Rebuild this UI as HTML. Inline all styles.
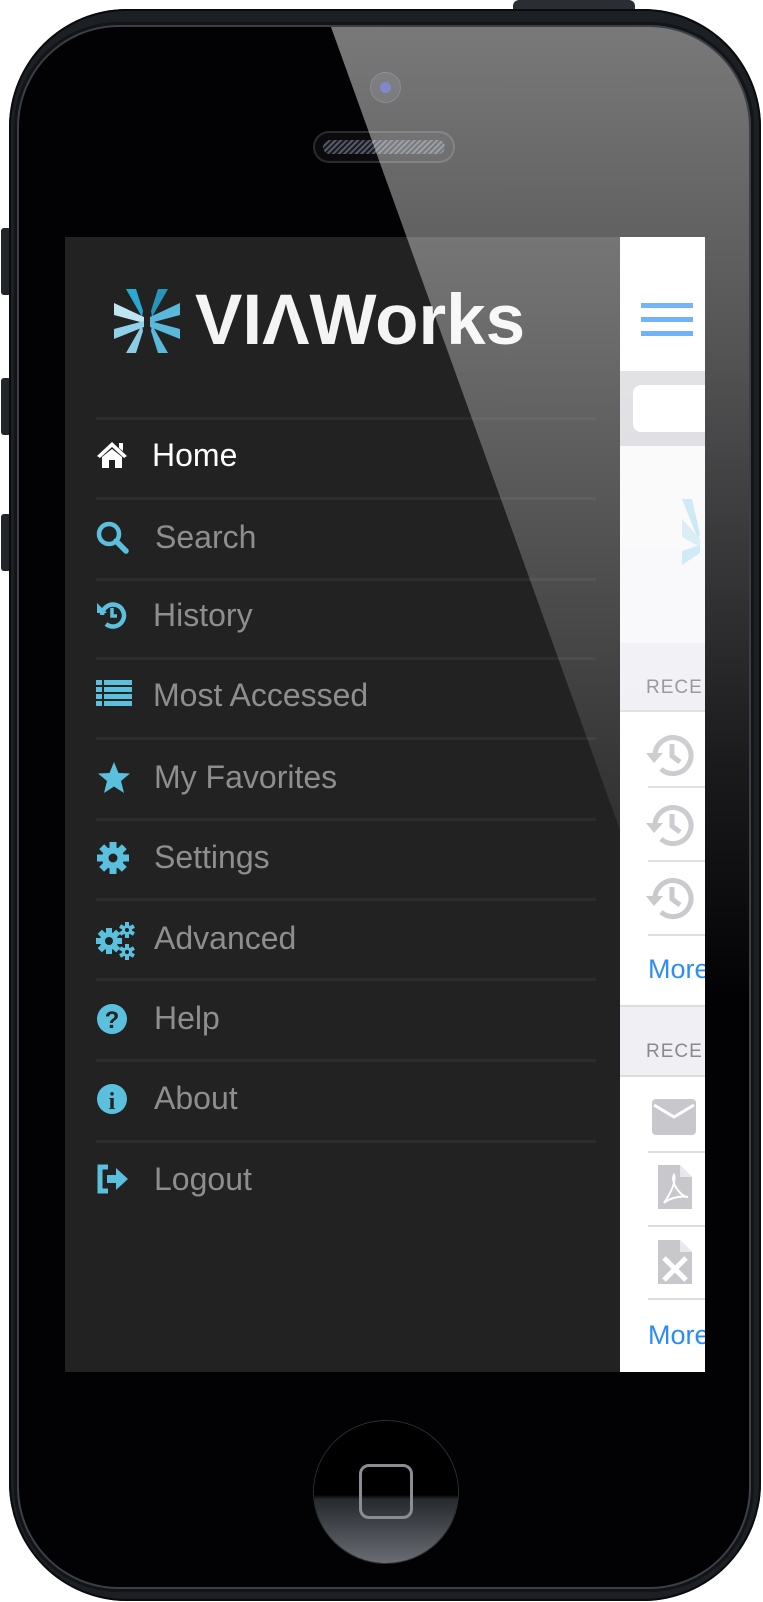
<!DOCTYPE html>
<html><head><meta charset="utf-8"><style>
*{margin:0;padding:0;box-sizing:border-box}
html,body{width:763px;height:1602px;background:#fff;overflow:hidden;font-family:"Liberation Sans",sans-serif}
.abs{position:absolute}
#phone{left:9px;top:9px;width:752px;height:1592px;border-radius:118px;background:#1c1f24;box-shadow:inset 0 0 0 2px #0a0b0d}
#face{left:19px;top:27px;width:730px;height:1560px;border-radius:100px;background:#020204;box-shadow:0 0 0 2px #3b3f46,0 0 0 5px #121418}
#screen{left:65px;top:237px;width:640px;height:1135px;background:#222;overflow:hidden}
.sep{position:absolute;left:31px;width:500px;height:3px;background:#2c2c2c}
.item{position:absolute;left:31px;height:40px;width:500px}
.item span{position:absolute;left:57px;top:0;font-size:32px;color:#8e8e8e;line-height:40px}
.item svg{position:absolute;left:0;top:4px}
#right{left:555px;top:0;width:85px;height:1135px;background:#fff}
.rec{position:absolute;left:26px;font-size:19px;color:#8a8a8e;letter-spacing:1px}
.more{position:absolute;left:28px;font-size:27px;color:#2a8cf5}
.rs{position:absolute;left:28px;width:80px;height:2px;background:#ddd}
</style></head><body>
<div class="abs" style="left:513px;top:0;width:122px;height:12px;background:#2a2e34;border-radius:6px 6px 0 0"></div>
<div class="abs" style="left:1px;top:228px;width:10px;height:67px;background:#22252a;border-radius:3px"></div>
<div class="abs" style="left:1px;top:378px;width:10px;height:57px;background:#22252a;border-radius:3px"></div>
<div class="abs" style="left:1px;top:514px;width:10px;height:57px;background:#22252a;border-radius:3px"></div>
<div id="phone" class="abs"></div>
<div id="face" class="abs"></div>
<div class="abs" style="left:371px;top:73px;width:29px;height:29px;border-radius:50%;background:#15161c;box-shadow:0 0 0 1px #333"><div class="abs" style="left:9px;top:9px;width:11px;height:11px;border-radius:50%;background:#1a2aa0"></div></div>
<div class="abs" style="left:315px;top:133px;width:138px;height:28px;border-radius:14px;background:#0b0b0d;box-shadow:0 0 0 2px #2a2c30"><div class="abs" style="left:8px;top:7px;width:122px;height:14px;border-radius:7px;background:repeating-linear-gradient(135deg,#555a66 0 2px,#1a1b20 2px 4px)"></div></div>
<div class="abs" style="left:314px;top:1421px;width:144px;height:142px;border-radius:50%;background:linear-gradient(#000 0 52%,#26292e 55%,#6a6e74 100%);box-shadow:0 0 0 1px #2b2e33"><div class="abs" style="left:45px;top:43px;width:54px;height:55px;border:3px solid #8a8d92;border-radius:10px"></div></div>

<div id="screen" class="abs">
 <svg class="abs" style="left:49px;top:52px" width="68" height="64" viewBox="0 0 68 64">
  <polygon points="12,0 22,0 29,22 28,28" fill="#29a9d2"/><polygon points="44,0 54,0 38,28 37,22" fill="#29a9d2" opacity=".85"/>
  <polygon points="0,14 30,28 30,34 0,26" fill="#bfe4f2"/><polygon points="66,14 66,26 36,34 36,28" fill="#5ab8da"/>
  <polygon points="0,40 30,32 30,38 0,50" fill="#8fd0ea"/><polygon points="36,32 66,40 66,50 36,38" fill="#5ab8da"/>
  <polygon points="28,36 29,42 22,64 12,64" fill="#8ccde6"/><polygon points="37,42 38,36 54,64 44,64" fill="#5ab8da"/>
 </svg>
 <div class="abs" style="left:130px;top:44px;font-size:71px;font-weight:bold;color:#f4f4f4;letter-spacing:0;line-height:80px">VIΛWorks</div>
 <div class="sep" style="top:180px"></div><div class="sep" style="top:260px"></div><div class="sep" style="top:341px"></div><div class="sep" style="top:420px"></div><div class="sep" style="top:500px"></div><div class="sep" style="top:581px"></div><div class="sep" style="top:661px"></div><div class="sep" style="top:741px"></div><div class="sep" style="top:822px"></div><div class="sep" style="top:903px"></div>
 <div class="item" style="top:198px"><svg width="32" height="30" viewBox="0 0 32 30"><path d="M16 3 L1 17 L4 19 L16 8 L28 19 L31 17 Z M6 18 L16 10 L26 18 L26 29 L19 29 L19 21 L13 21 L13 29 L6 29Z M23 4h4v8l-4-3z" fill="#fff"/></svg><span style="color:#fff;left:56px">Home</span></div>
 <div class="item" style="top:280px"><svg width="34" height="34" viewBox="0 0 34 34"><circle cx="13" cy="13" r="10" fill="none" stroke="#5bc0de" stroke-width="4.5"/><path d="M20 20 L30 30" stroke="#5bc0de" stroke-width="5.5" stroke-linecap="round"/></svg><span style="left:59px">Search</span></div>
 <div class="item" style="top:358px"><svg width="32" height="32" viewBox="0 0 32 32"><path d="M6 16 A11 11 0 1 1 10 25" fill="none" stroke="#5bc0de" stroke-width="4.5"/><path d="M1 4 L1 14 L11 14 Z" fill="#5bc0de"/><path d="M16 9 V17 H21" fill="none" stroke="#5bc0de" stroke-width="3.5"/></svg><span>History</span></div>
 <div class="item" style="top:438px"><svg width="36" height="30" viewBox="0 0 36 30"><g fill="#5bc0de"><rect x="0" y="1" width="6" height="5"/><rect x="8" y="1" width="28" height="5"/><rect x="0" y="8" width="6" height="5"/><rect x="8" y="8" width="28" height="5"/><rect x="0" y="15" width="6" height="5"/><rect x="8" y="15" width="28" height="5"/><rect x="0" y="22" width="6" height="5"/><rect x="8" y="22" width="28" height="5"/></g></svg><span>Most Accessed</span></div>
 <div class="item" style="top:520px"><svg width="36" height="34" viewBox="0 0 36 34"><path d="M18 1 L22.5 12 L34 12.5 L25 20 L28 32 L18 25.5 L8 32 L11 20 L2 12.5 L13.5 12Z" fill="#5bc0de"/></svg><span style="left:58px">My Favorites</span></div>
 <div class="item" style="top:600px"><svg width="34" height="34" viewBox="0 0 34 34"><g transform="translate(17,17)" fill="#5bc0de"><circle r="11"/><rect x="-3.5" y="-16" width="7" height="32"/><rect x="-3.5" y="-16" width="7" height="32" transform="rotate(45)"/><rect x="-3.5" y="-16" width="7" height="32" transform="rotate(90)"/><rect x="-3.5" y="-16" width="7" height="32" transform="rotate(135)"/><circle r="4.5" fill="#222"/></g></svg><span style="left:58px">Settings</span></div>
 <div class="item" style="top:681px"><svg width="40" height="38" viewBox="0 0 40 38"><g fill="#5bc0de"><g transform="translate(13,19)"><circle r="9"/><rect x="-3" y="-13" width="6" height="26"/><rect x="-3" y="-13" width="6" height="26" transform="rotate(45)"/><rect x="-3" y="-13" width="6" height="26" transform="rotate(90)"/><rect x="-3" y="-13" width="6" height="26" transform="rotate(135)"/><circle r="4" fill="#222"/></g><g transform="translate(31,8)"><circle r="5"/><rect x="-2" y="-8" width="4" height="16"/><rect x="-2" y="-8" width="4" height="16" transform="rotate(60)"/><rect x="-2" y="-8" width="4" height="16" transform="rotate(120)"/><circle r="2" fill="#222"/></g><g transform="translate(31,30)"><circle r="5"/><rect x="-2" y="-8" width="4" height="16"/><rect x="-2" y="-8" width="4" height="16" transform="rotate(60)"/><rect x="-2" y="-8" width="4" height="16" transform="rotate(120)"/><circle r="2" fill="#222"/></g></g></svg><span style="left:58px">Advanced</span></div>
 <div class="item" style="top:761px"><svg width="34" height="34" viewBox="0 0 34 34"><circle cx="16" cy="17" r="15" fill="#5bc0de"/><text x="16" y="26" text-anchor="middle" font-size="24" font-weight="bold" fill="#222" font-family="Liberation Sans">?</text></svg><span style="left:58px">Help</span></div>
 <div class="item" style="top:841px"><svg width="34" height="34" viewBox="0 0 34 34"><circle cx="16" cy="17" r="15" fill="#5bc0de"/><text x="16" y="27" text-anchor="middle" font-size="24" font-weight="bold" fill="#222" font-family="Liberation Serif">i</text></svg><span style="left:58px">About</span></div>
 <div class="item" style="top:922px"><svg width="34" height="32" viewBox="0 0 34 32"><path d="M12 4 H4 V28 H12" fill="none" stroke="#5bc0de" stroke-width="5"/><path d="M11 12 H20 V5 L32 16 L20 27 V20 H11Z" fill="#5bc0de"/></svg><span style="left:58px">Logout</span></div>

 <div id="right" class="abs">
  <div class="abs" style="left:21px;top:66px;width:52px;height:5px;background:#2a8cf5"></div>
  <div class="abs" style="left:21px;top:80px;width:52px;height:5px;background:#2a8cf5"></div>
  <div class="abs" style="left:21px;top:94px;width:52px;height:5px;background:#2a8cf5"></div>
  <div class="abs" style="left:0;top:134px;width:85px;height:75px;background:#d5d5da"></div>
  <div class="abs" style="left:13px;top:148px;width:80px;height:47px;background:#fff;border-radius:8px"></div>
  <div class="abs" style="left:0;top:209px;width:85px;height:197px;background:#f8f8fa"></div>
  <svg class="abs" style="left:62px;top:262px" width="30" height="90" viewBox="0 0 30 90"><polygon points="0,0 10,0 18,35 16,40" fill="#bfe3f1"/><polygon points="0,20 18,40 18,48 0,38" fill="#cfe9f4"/><polygon points="0,52 18,46 18,54 0,66" fill="#c5e6f3"/></svg>
  <div class="abs" style="left:0;top:406px;width:85px;height:69px;background:#efeff4;border-bottom:2px solid #ddd"></div>
  <div class="rec" style="top:440px">RECE</div>
  <div class="rs" style="top:549px"></div><div class="rs" style="top:623px"></div><div class="rs" style="top:697px"></div>
  <div class="more" style="top:717px">More</div>
  <div class="abs" style="left:0;top:768px;width:85px;height:72px;background:#efeff4;border-top:2px solid #ddd;border-bottom:2px solid #ddd"></div>
  <div class="rec" style="top:804px">RECE</div>
  <div class="rs" style="top:914px"></div><div class="rs" style="top:988px"></div><div class="rs" style="top:1061px"></div>
  <div class="more" style="top:1083px">More</div>
  <svg class="abs" style="left:25px;top:494px" width="50" height="240" viewBox="0 0 50 240">
   <g fill="none" stroke="#c8c8cc" stroke-width="5"><path d="M10 25 A18 18 0 1 1 16 38"/><path d="M27 13 V25 L35 31"/><path d="M10 95 A18 18 0 1 1 16 108"/><path d="M27 83 V95 L35 101"/><path d="M10 168 A18 18 0 1 1 16 181"/><path d="M27 156 V168 L35 174"/></g>
   <g fill="#c8c8cc"><path d="M1 22 H18 L9 32Z"/><path d="M1 92 H18 L9 102Z"/><path d="M1 165 H18 L9 175Z"/></g>
  </svg>
  <svg class="abs" style="left:30px;top:862px" width="50" height="200" viewBox="0 0 50 200">
   <rect x="2" y="0" width="44" height="36" rx="4" fill="#c8c8cc"/><path d="M4 6 L24 18 L44 6" fill="none" stroke="#fff" stroke-width="3"/>
   <path d="M8 66 H30 L42 78 V110 H8Z" fill="#c8c8cc"/><path d="M30 66 V78 H42" fill="#e8e8ea"/><path d="M14 104 C22 92 26 82 24 76 C20 82 30 98 38 98 C30 96 18 100 14 104Z" fill="none" stroke="#fff" stroke-width="2"/>
   <path d="M8 141 H30 L42 153 V185 H8Z" fill="#c8c8cc"/><path d="M30 141 V153 H42" fill="#e8e8ea"/><path d="M14 159 L36 181 M36 159 L14 181" stroke="#fff" stroke-width="5"/>
  </svg>
 </div>
</div>
<svg class="abs" style="left:0;top:0" width="763" height="1602">
 <defs><linearGradient id="g" gradientUnits="userSpaceOnUse" x1="0" y1="27" x2="0" y2="1000"><stop offset="0" stop-color="#fff" stop-opacity=".47"/><stop offset=".3" stop-color="#fff" stop-opacity=".34"/><stop offset=".75" stop-color="#fff" stop-opacity=".1"/><stop offset="1" stop-color="#fff" stop-opacity="0"/></linearGradient>
 <clipPath id="c"><rect x="19" y="27" width="730" height="1560" rx="100"/></clipPath></defs>
 <polygon clip-path="url(#c)" points="331,27 760,27 760,1000 620,1000 620,830" fill="url(#g)"/>
</svg>
</body></html>
